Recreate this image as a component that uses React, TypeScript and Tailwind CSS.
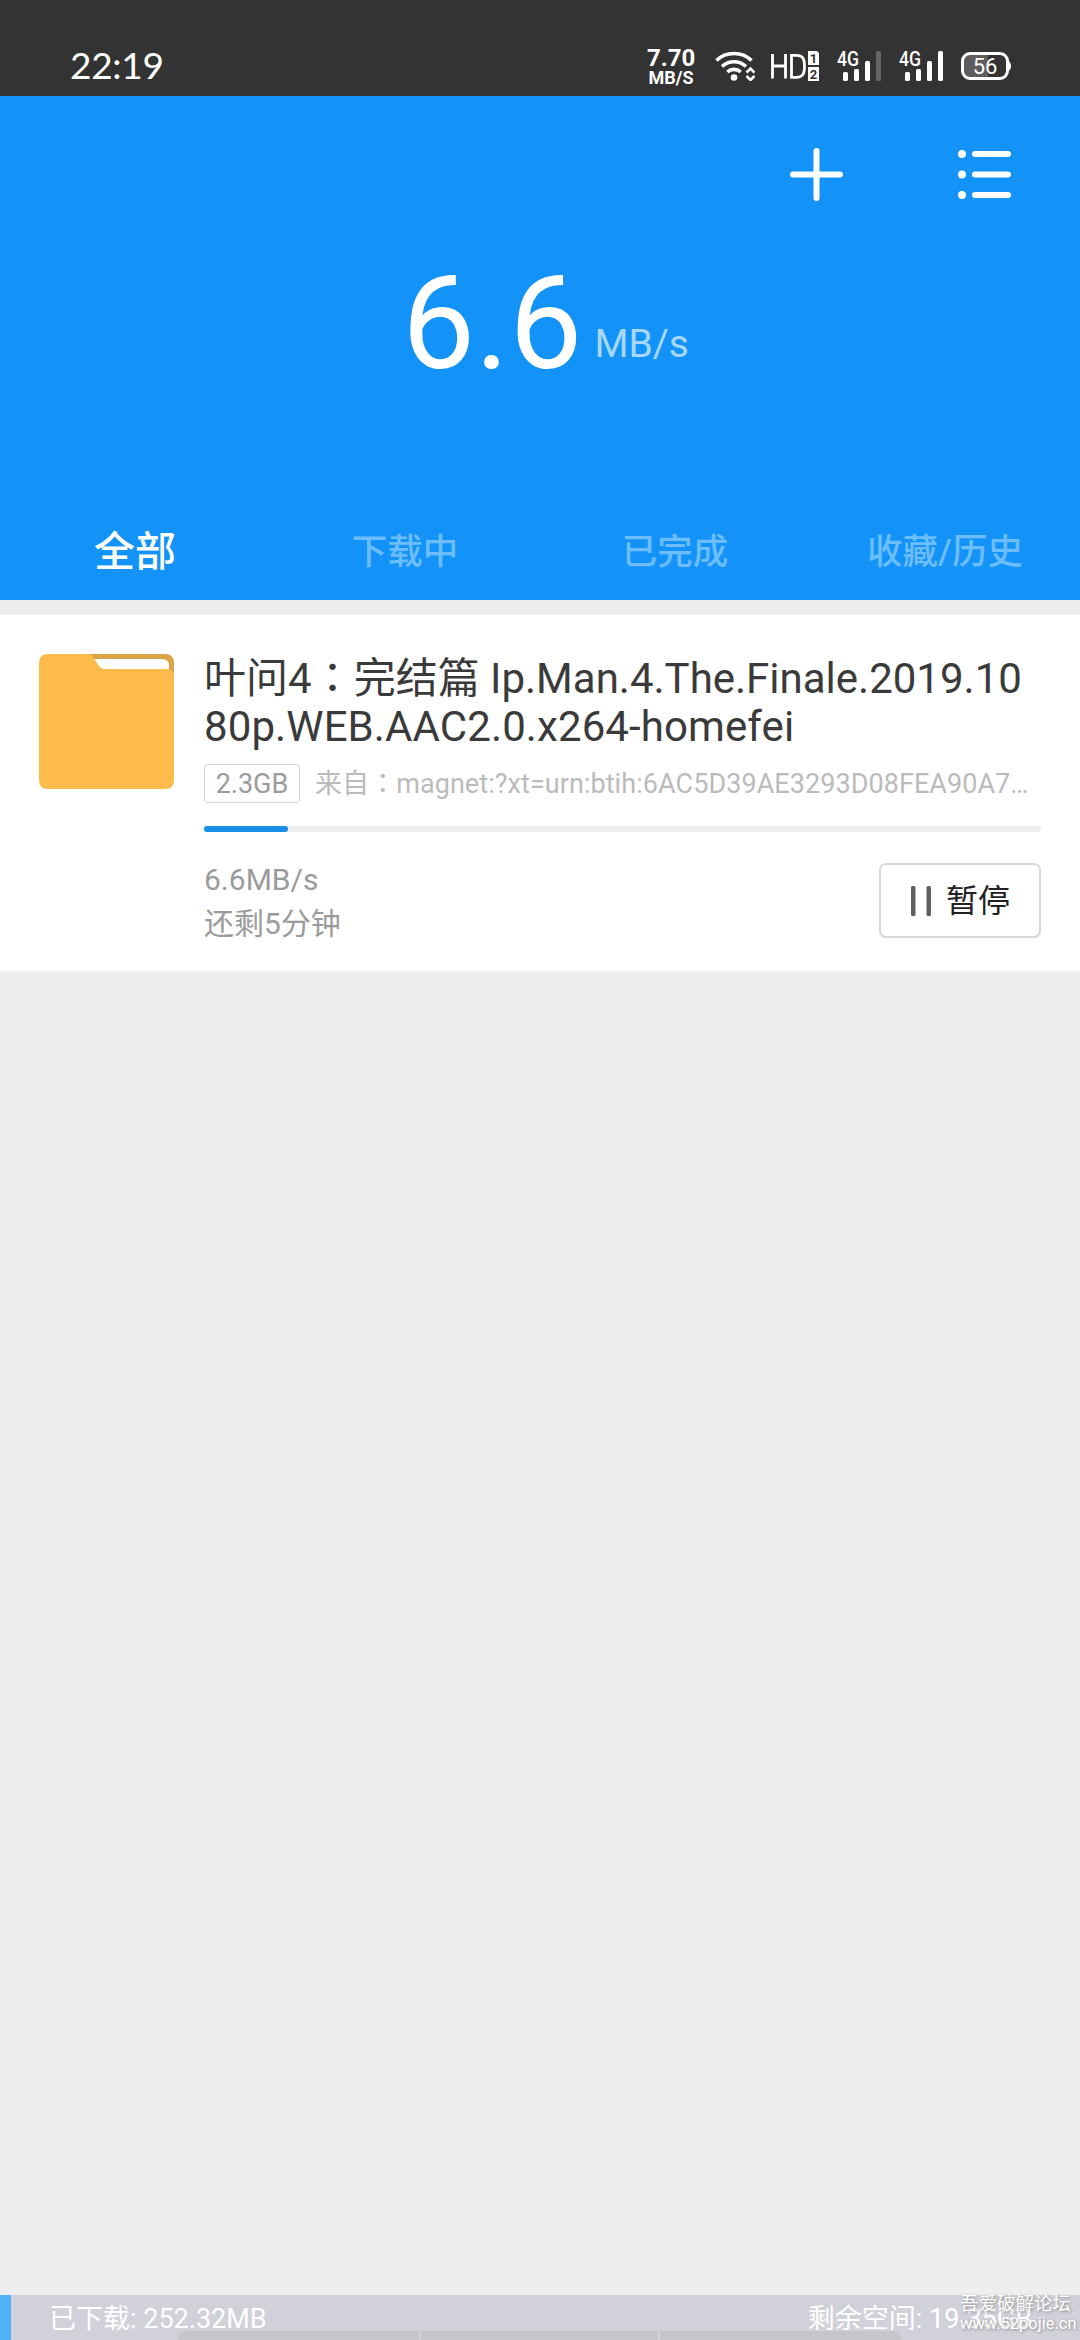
import type { ReactNode } from 'react';
import clsx from 'clsx';

interface Task {
  name: ReactNode;
  size: string;
  source: string;
  speed: string;
  remaining: string;
  percent: number;
}

const tabs = ['全部', '下载中', '已完成', '收藏/历史'];

const task: Task = {
  name: (
    <>
      叶问4<Colon />完结篇 Ip.Man.4.The.Finale.2019.10
      <br />
      <span className="tracking-[0.1px]">80p.WEB.AAC2.0.x264-homefei</span>
    </>
  ),
  size: '2.3GB',
  source: 'magnet:?xt=urn:btih:6AC5D39AE3293D08FEA90A7…',
  speed: '6.6MB/s',
  remaining: '还剩5分钟',
  percent: 10,
};

// full-width colon, centred in its cell
function Colon() {
  return <span className="font-['Noto_Sans_CJK_TC',sans-serif] leading-[0]">：</span>;
}

function WifiIcon() {
  return (
    <svg className="w-10 h-[30px]" viewBox="0 0 40 30" fill="none" stroke="#fff" strokeWidth="3.6">
      <path d="M1.5 9.5C11 .2 27 .2 36.5 9.5" />
      <path d="M7 15.5c6.8-6.4 17.2-6.4 24 0" />
      <path d="M12.3 21c3.8-3.5 9.6-3.5 13.4 0" />
      <circle cx="19" cy="26.5" r="3.3" fill="#fff" stroke="none" />
      <path d="M31.5 21.5l4-4 4 4M31.5 25l4 4 4-4" strokeWidth="2.6" />
    </svg>
  );
}

function HdIcon() {
  return (
    <svg className="w-[50px] h-[30px]" viewBox="0 0 50 30">
      <path d="M1.5 3v24.5M14.5 3v24.5M1.5 15h13M20.5 4.3v22h5c6 0 8-3 8-11s-2-11-8-11z" fill="none" stroke="#fff" strokeWidth="2.8" />
      <path d="M37 0h9l2 2v12H37zM37 16h11v14H37z" fill="#fff" />
      <text x="42.5" y="12" textAnchor="middle" className="fill-[#333] text-[13px] font-bold font-[Roboto,sans-serif]">1</text>
      <text x="42.5" y="28" textAnchor="middle" className="fill-[#333] text-[13px] font-bold font-[Roboto,sans-serif]">2</text>
    </svg>
  );
}

function SignalIcon({ bars }: { bars: number }) {
  const heights = [9, 12, 20, 30];
  return (
    <svg className="w-[45px] h-[30px] overflow-visible" viewBox="0 0 45 30">
      <text x="0" y="15" textLength="22" lengthAdjust="spacingAndGlyphs" className="fill-white text-[20.5px] font-medium font-[Roboto,sans-serif]">4G</text>
      {heights.map((h, i) => (
        <rect key={h} x={6 + i * 11} y={30 - h} width="5" height={h} rx="1.5" fill={i < bars ? '#fff' : '#666'} />
      ))}
    </svg>
  );
}

function BatteryIcon() {
  return (
    <svg className="w-[51px] h-7 mt-px" viewBox="0 0 51 28">
      <path d="M3 7q0-4 4-4h20v22H7q-4 0-4-4z" fill="#5c5c5c" />
      <rect x="1.5" y="1.5" width="45" height="25" rx="7.5" fill="none" stroke="#fff" strokeWidth="3" />
      <path d="M47 8.5q3 2 3 5.500t-3 5.500z" fill="#fff" />
      <text x="24" y="21.5" textAnchor="middle" className="fill-white text-[22px] font-[Roboto,sans-serif]">56</text>
    </svg>
  );
}

function FolderIcon() {
  return (
    <svg className="w-[135px] h-[135px] shrink-0" viewBox="0 0 135 135">
      <path d="M45 0h81q9 0 9 9v16H45z" fill="#d9a546" />
      <path d="M50 5h73q7 0 7 7v10H50z" fill="#fff" />
      <path d="M9 0h39q4 0 6 3l6 9q2 3 6 3h61q8 0 8 8v103q0 9-9 9H9q-9 0-9-9V9q0-9 9-9z" fill="#fcbb4b" />
    </svg>
  );
}

function StatusBar() {
  return (
    <div className="h-24 bg-[#333] text-white flex items-start pl-[70px] pr-[68px] pt-[51px]">
      <div className="font-[Lato,sans-serif] text-[37px] leading-[30px] -mt-px tracking-[-0.3px] flex-1">22:19</div>
      <div className="w-12 mr-5 -mt-[4px] text-center font-bold">
        <div className="text-2xl leading-[22px]">7.70</div>
        <div className="text-lg leading-[18px]">MB/S</div>
      </div>
      <WifiIcon />
      <span className="w-4" />
      <HdIcon />
      <span className="w-4" />
      <SignalIcon bars={3} />
      <span className="w-[17px]" />
      <SignalIcon bars={4} />
      <span className="w-[17px]" />
      <BatteryIcon />
    </div>
  );
}

function Header() {
  return (
    <header className="h-[504px] bg-[#1393f8] text-white flex flex-col">
      <div className="flex justify-end gap-[115px] pt-[52px] pr-[69px]">
        <button>
          <svg className="w-[53px] h-[53px]" viewBox="0 0 53 53" stroke="#fff" strokeWidth="6" strokeLinecap="round">
            <path d="M26.5 3v47M3 26.5h47" />
          </svg>
        </button>
        <button>
          <svg className="w-[53px] h-[53px]" viewBox="0 0 53 53" stroke="#fff" strokeWidth="6" strokeLinecap="round">
            <path d="M17 6h33M17 26.5h33M17 47h33" />
            <path d="M4 6h0M4 26.5h0M4 47h0" strokeWidth="8" />
          </svg>
        </button>
      </div>
      <div className="flex items-end mt-[47px] pl-[402px] h-[152px]">
        <span className="text-[130px] leading-[152px]">6.6</span>
        <span className="text-[39px] leading-none text-[#a6d8fd] ml-[12px] mb-[36px]">MB/s</span>
      </div>
      <nav className="grid grid-cols-4 h-[95px] mt-auto">
        {tabs.map((tab, i) => (
          <button
            key={tab}
            className={clsx('flex items-center justify-center font-medium', i === 0 ? 'text-[41px]' : 'text-[35.5px] text-[#6cbdfb]')}
          >
            {tab}
          </button>
        ))}
      </nav>
    </header>
  );
}

function TaskCard({ name, size, source, speed, remaining, percent }: Task) {
  return (
    <section className="mt-[15px] h-[356px] bg-white flex gap-[30px] px-[39px] pt-[39px]">
      <FolderIcon />
      <div className="w-[837px]">
        <h2 className="h-[97px] pt-px text-[42px] leading-[48px] text-[#3a3a3a] whitespace-nowrap">{name}</h2>
        <div className="flex items-center h-[39px] mt-[13px] text-[27px]">
          <span className="w-24 h-[39px] leading-[39px] text-center border border-[#d5d5d5] rounded-[4px] text-[#9b9b9b]">{size}</span>
          <span className="ml-[15px] pt-[2px] leading-[39px] tracking-[0.06px] text-[#bbb] whitespace-nowrap">来自<Colon />{source}</span>
        </div>
        <div className="mt-[23px] h-[6px] rounded-full bg-[#eee]">
          <div className="h-full rounded-full bg-[#1a8fe9]" style={{ width: `${percent}%` }} />
        </div>
        <div className="flex justify-between mt-[31px]">
          <div className="text-[30px] leading-[44px] text-[#9b9b9b] -mt-[5px]">
            <p>{speed}</p>
            <p>{remaining}</p>
          </div>
          <button className="w-[162px] h-[75px] flex items-center pl-[30px] border-2 border-[#d8d8d8] rounded-[7px] text-[32px] text-[#222]">
            <svg className="w-5 h-[30px] mr-[15px]" viewBox="0 0 20 30" fill="#606060">
              <rect x="0" width="4.5" height="30" rx="1.5" />
              <rect x="15.5" width="4.5" height="30" rx="1.5" />
            </svg>
            暂停
          </button>
        </div>
      </div>
    </section>
  );
}

function StorageBar() {
  return (
    <footer className="relative h-[45px] bg-[#d0d1d9] flex overflow-hidden text-white text-[27px] leading-[48px]">
      <div className="absolute left-[178px] bottom-0 flex gap-[2px] h-[9px] w-[723px]">
        <span className="w-[241px] bg-[#c5c6ca] rounded-tl-lg" />
        <span className="w-[237px] bg-[#c5c6ca]" />
        <span className="flex-1 bg-[#c5c6ca] rounded-tr-lg" />
      </div>
      <div className="w-[11px] bg-[#50b0f8]" />
      <div className="relative flex-1 flex justify-between pl-[38px] pr-[48px]">
        <span>已下载: 252.32MB</span>
        <span>剩余空间: 19.35GB</span>
      </div>
    </footer>
  );
}

export default function App() {
  return (
    <div className="relative w-[1080px] h-[2340px] overflow-hidden bg-[#eeeef0] flex flex-col font-[Roboto,'Noto_Sans_CJK_SC',sans-serif]">
      <StatusBar />
      <Header />
      <TaskCard {...task} />
      <div className="flex-1" />
      <StorageBar />
      <div className="absolute right-[9px] bottom-[6px] w-[111px] text-white text-center whitespace-nowrap [text-shadow:1px_1px_3px_#888]">
        <p className="text-[18.5px] leading-[20px]">吾爱破解论坛</p>
        <p className="text-[16.5px] leading-[20px]">www.52pojie.cn</p>
      </div>
    </div>
  );
}
